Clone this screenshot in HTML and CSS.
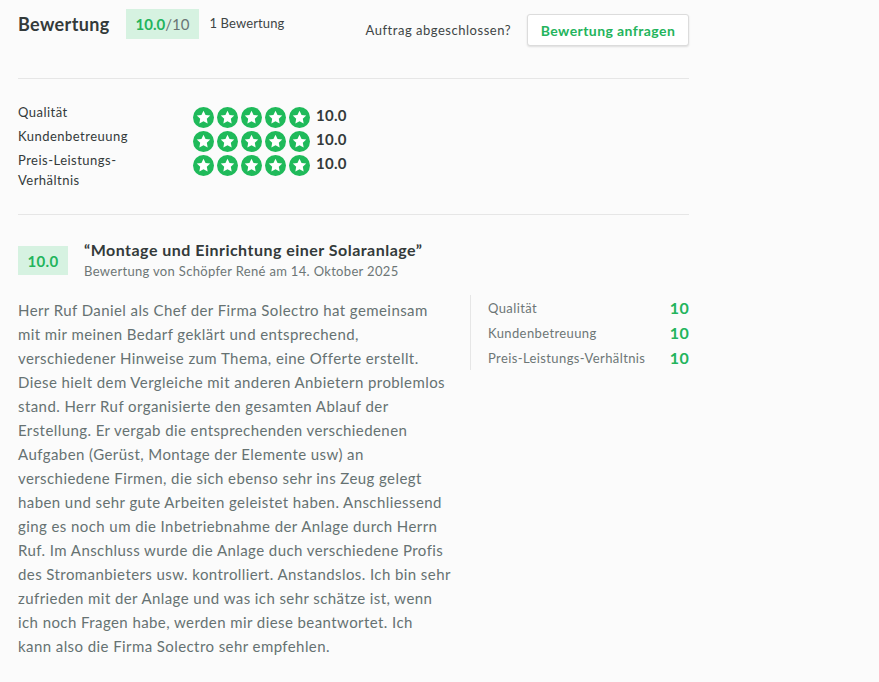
FILE: index.html
```
<!DOCTYPE html>
<html lang="de">
<head>
<meta charset="utf-8">
<link rel="stylesheet" href="styles.css">
</head>
<body>
<div class="page">
  <header class="head">
    <div class="head-left">
      <h1 class="title">Bewertung</h1>
      <span class="score-badge"><b>10.0</b>/10</span>
      <span class="count">1 Bewertung</span>
    </div>
    <div class="head-right">
      <span class="ask">Auftrag abgeschlossen?</span>
      <button class="btn">Bewertung anfragen</button>
    </div>
  </header>
  <hr class="rule">
  <section class="summary">
    <div class="srow">
      <span class="slabel">Qualität</span>
      <span class="stars">
        <svg viewBox="0 0 20 20"><circle cx="10" cy="10" r="10"/><path d="M10 3.6l1.95 4.05 4.45.55-3.26 3.06.82 4.4L10 13.5l-3.96 2.16.82-4.4L3.6 8.2l4.45-.55z"/></svg>
        <svg viewBox="0 0 20 20"><circle cx="10" cy="10" r="10"/><path d="M10 3.6l1.95 4.05 4.45.55-3.26 3.06.82 4.4L10 13.5l-3.96 2.16.82-4.4L3.6 8.2l4.45-.55z"/></svg>
        <svg viewBox="0 0 20 20"><circle cx="10" cy="10" r="10"/><path d="M10 3.6l1.95 4.05 4.45.55-3.26 3.06.82 4.4L10 13.5l-3.96 2.16.82-4.4L3.6 8.2l4.45-.55z"/></svg>
        <svg viewBox="0 0 20 20"><circle cx="10" cy="10" r="10"/><path d="M10 3.6l1.95 4.05 4.45.55-3.26 3.06.82 4.4L10 13.5l-3.96 2.16.82-4.4L3.6 8.2l4.45-.55z"/></svg>
        <svg viewBox="0 0 20 20"><circle cx="10" cy="10" r="10"/><path d="M10 3.6l1.95 4.05 4.45.55-3.26 3.06.82 4.4L10 13.5l-3.96 2.16.82-4.4L3.6 8.2l4.45-.55z"/></svg>
      </span>
      <span class="sval">10.0</span>
    </div>
    <div class="srow">
      <span class="slabel">Kundenbetreuung</span>
      <span class="stars">
        <svg viewBox="0 0 20 20"><circle cx="10" cy="10" r="10"/><path d="M10 3.6l1.95 4.05 4.45.55-3.26 3.06.82 4.4L10 13.5l-3.96 2.16.82-4.4L3.6 8.2l4.45-.55z"/></svg>
        <svg viewBox="0 0 20 20"><circle cx="10" cy="10" r="10"/><path d="M10 3.6l1.95 4.05 4.45.55-3.26 3.06.82 4.4L10 13.5l-3.96 2.16.82-4.4L3.6 8.2l4.45-.55z"/></svg>
        <svg viewBox="0 0 20 20"><circle cx="10" cy="10" r="10"/><path d="M10 3.6l1.95 4.05 4.45.55-3.26 3.06.82 4.4L10 13.5l-3.96 2.16.82-4.4L3.6 8.2l4.45-.55z"/></svg>
        <svg viewBox="0 0 20 20"><circle cx="10" cy="10" r="10"/><path d="M10 3.6l1.95 4.05 4.45.55-3.26 3.06.82 4.4L10 13.5l-3.96 2.16.82-4.4L3.6 8.2l4.45-.55z"/></svg>
        <svg viewBox="0 0 20 20"><circle cx="10" cy="10" r="10"/><path d="M10 3.6l1.95 4.05 4.45.55-3.26 3.06.82 4.4L10 13.5l-3.96 2.16.82-4.4L3.6 8.2l4.45-.55z"/></svg>
      </span>
      <span class="sval">10.0</span>
    </div>
    <div class="srow">
      <span class="slabel">Preis-Leistungs-<br>Verhältnis</span>
      <span class="stars">
        <svg viewBox="0 0 20 20"><circle cx="10" cy="10" r="10"/><path d="M10 3.6l1.95 4.05 4.45.55-3.26 3.06.82 4.4L10 13.5l-3.96 2.16.82-4.4L3.6 8.2l4.45-.55z"/></svg>
        <svg viewBox="0 0 20 20"><circle cx="10" cy="10" r="10"/><path d="M10 3.6l1.95 4.05 4.45.55-3.26 3.06.82 4.4L10 13.5l-3.96 2.16.82-4.4L3.6 8.2l4.45-.55z"/></svg>
        <svg viewBox="0 0 20 20"><circle cx="10" cy="10" r="10"/><path d="M10 3.6l1.95 4.05 4.45.55-3.26 3.06.82 4.4L10 13.5l-3.96 2.16.82-4.4L3.6 8.2l4.45-.55z"/></svg>
        <svg viewBox="0 0 20 20"><circle cx="10" cy="10" r="10"/><path d="M10 3.6l1.95 4.05 4.45.55-3.26 3.06.82 4.4L10 13.5l-3.96 2.16.82-4.4L3.6 8.2l4.45-.55z"/></svg>
        <svg viewBox="0 0 20 20"><circle cx="10" cy="10" r="10"/><path d="M10 3.6l1.95 4.05 4.45.55-3.26 3.06.82 4.4L10 13.5l-3.96 2.16.82-4.4L3.6 8.2l4.45-.55z"/></svg>
      </span>
      <span class="sval">10.0</span>
    </div>
  </section>
  <hr class="rule">
  <article class="review">
    <div class="rhead">
      <span class="rbadge">10.0</span>
      <div class="rmeta">
        <h2 class="rtitle">“Montage und Einrichtung einer Solaranlage”</h2>
        <p class="rby">Bewertung von Schöpfer René am 14. Oktober 2025</p>
      </div>
    </div>
    <div class="rbody">
      <p class="rtext">Herr Ruf Daniel als Chef der Firma Solectro hat gemeinsam<br>mit mir meinen Bedarf geklärt und entsprechend,<br>verschiedener Hinweise zum Thema, eine Offerte erstellt.<br>Diese hielt dem Vergleiche mit anderen Anbietern problemlos<br>stand. Herr Ruf organisierte den gesamten Ablauf der<br>Erstellung. Er vergab die entsprechenden verschiedenen<br>Aufgaben (Gerüst, Montage der Elemente usw) an<br>verschiedene Firmen, die sich ebenso sehr ins Zeug gelegt<br>haben und sehr gute Arbeiten geleistet haben. Anschliessend<br>ging es noch um die Inbetriebnahme der Anlage durch Herrn<br>Ruf. Im Anschluss wurde die Anlage duch verschiedene Profis<br>des Stromanbieters usw. kontrolliert. Anstandslos. Ich bin sehr<br>zufrieden mit der Anlage und was ich sehr schätze ist, wenn<br>ich noch Fragen habe, werden mir diese beantwortet. Ich<br>kann also die Firma Solectro sehr empfehlen.</p>
      <ul class="rscores">
        <li><span>Qualität</span><b>10</b></li>
        <li><span>Kundenbetreuung</span><b>10</b></li>
        <li><span>Preis-Leistungs-Verhältnis</span><b>10</b></li>
      </ul>
    </div>
  </article>
</div>
</body>
</html>
```
FILE: styles.css
```
* { box-sizing: border-box; }
html, body { margin: 0; background: #fbfbfb; }
body { font-family: "Lato", "Open Sans", sans-serif; color: #333a3a; letter-spacing: 0.03em; }
.page { width: 671px; margin-left: 18px; }
.head { display: flex; justify-content: space-between; align-items: flex-start; padding-top: 9px; height: 78px; }
.head-left { display: flex; align-items: center; height: 30px; }
.title { font-size: 18px; font-weight: 700; margin: 0 16px 0 0; color: #333a3a; letter-spacing: 0.02em; }
.score-badge { background: #d6f2e1; color: #6a7575; font-size: 15px; padding: 0 10px; height: 30px; line-height: 30px; margin-right: 10px; letter-spacing: 0; }
.score-badge b { color: #23b45c; font-weight: 700; }
.count { font-size: 13px; color: #3e4545; margin-top: -2px; letter-spacing: 0.01em; }
.head-right { display: flex; align-items: center; padding-top: 5px; }
.ask { font-size: 13px; color: #3e4545; margin-right: 16px; letter-spacing: 0.04em; }
.btn { font-family: inherit; letter-spacing: 0.03em; font-size: 14px; font-weight: 700; color: #23b45c; background: #fff; border: 1px solid #dcdcdc; border-radius: 3px; height: 32px; width: 162px; padding: 0; box-shadow: 0 1px 2px rgba(0,0,0,0.12); }
.rule { border: 0; border-top: 1px solid #e6e6e6; margin: 0; }
.summary { padding: 23px 0 24px; }
.srow { display: flex; align-items: flex-start; min-height: 24px; }
.slabel { width: 175px; font-size: 13px; line-height: 20px; color: #333a3a; }
.stars { display: flex; gap: 3px; padding-top: 5px; height: 24px; }
.stars svg { width: 21px; height: 21px; flex: none; }
.stars circle { fill: #1fba5a; }
.stars path { fill: #fff; }
.sval { font-size: 15px; font-weight: 700; margin-left: 6px; line-height: 20px; padding-top: 3px; color: #333a3a; letter-spacing: 0.02em; }
.review { padding-top: 24px; }
.rhead { display: flex; align-items: flex-start; }
.rbadge { width: 50px; height: 29px; margin-top: 7px; background: #d6f2e1; color: #23b45c; font-weight: 700; font-size: 15px; display: flex; align-items: center; justify-content: center; margin-right: 16px; letter-spacing: 0.02em; }
.rmeta { display: flex; flex-direction: column; }
.rtitle { margin: 0; font-size: 16px; font-weight: 700; line-height: 22px; color: #333a3a; letter-spacing: 0.03em; }
.rby { margin: 0; font-size: 13px; color: #6d7676; line-height: 20px; letter-spacing: 0.025em; }
.rbody { display: flex; margin-top: 17px; }
.rtext { width: 452px; margin: 0; font-size: 15px; line-height: 24px; color: #667272; white-space: nowrap; letter-spacing: 0.028em; }
.rscores { list-style: none; margin: -3px 0 0 0; padding: 0 0 0 17px; border-left: 1px solid #e6e6e6; flex: 1; align-self: flex-start; height: 75px; }
.rscores li { display: flex; justify-content: space-between; align-items: center; height: 25px; }
.rscores span { font-size: 13px; color: #6d7676; letter-spacing: 0.03em; }
.rscores b { font-size: 16px; color: #23b45c; font-weight: 700; letter-spacing: 0.02em; }
```
